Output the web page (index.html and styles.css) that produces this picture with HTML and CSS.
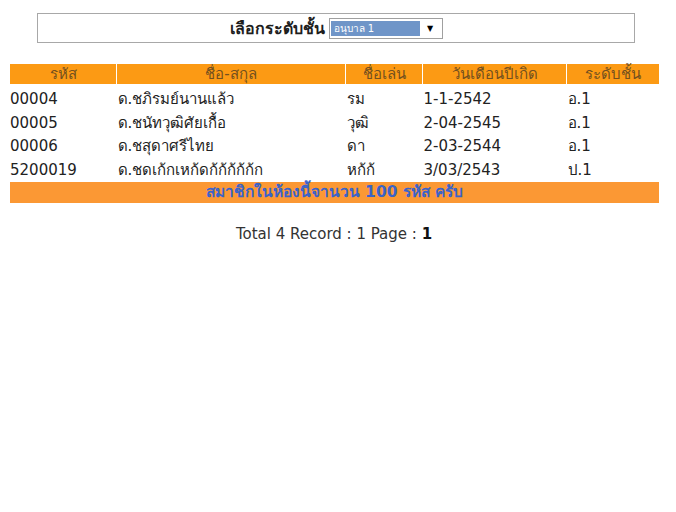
FILE: index.html
```html
<!DOCTYPE html>
<html lang="th">
<head>
<meta charset="utf-8">
<title>รายชื่อนักเรียน</title>
<link rel="stylesheet" href="styles.css">
</head>
<body>
<div class="page">
  <div class="filter">
    <span class="filter-label">เลือกระดับชั้น</span>
    <div class="select">
      <span class="select-value">อนุบาล 1</span>
      <span class="select-arrow">▼</span>
    </div>
  </div>

  <table class="list">
    <thead>
      <tr>
        <th class="c1">รหัส</th>
        <th class="c2">ชื่อ-สกุล</th>
        <th class="c3">ชื่อเล่น</th>
        <th class="c4">วันเดือนปีเกิด</th>
        <th class="c5">ระดับชั้น</th>
      </tr>
    </thead>
    <tbody>
      <tr class="first"><td>00004</td><td>ด.ชภิรมย์นานแล้ว</td><td>รม</td><td>1-1-2542</td><td>อ.1</td></tr>
      <tr><td>00005</td><td>ด.ชนัทวุฒิศัยเกื้อ</td><td>วุฒิ</td><td>2-04-2545</td><td>อ.1</td></tr>
      <tr><td>00006</td><td>ด.ชสุดาศรีไทย</td><td>ดา</td><td>2-03-2544</td><td>อ.1</td></tr>
      <tr><td>5200019</td><td>ด.ชดเก้กเหก้ดก้ก้ก้ก้ก้ก</td><td>หก้ก้</td><td>3/03/2543</td><td>ป.1</td></tr>
    </tbody>
    <tfoot>
      <tr><td colspan="5">สมาชิกในห้องนี้จานวน 100 รหัส ครับ</td></tr>
    </tfoot>
  </table>

  <p class="pager">Total 4 Record : 1 Page : <b>1</b></p>
</div>
</body>
</html>
```

FILE: styles.css
```css
html, body {
  margin: 0;
  padding: 0;
  background: #ffffff;
}

body {
  font-family: "DejaVu Sans", Tahoma, sans-serif;
  color: #222222;
}

.page {
  padding-top: 13px;
}

.filter {
  margin: 0 41px 0 37px;
  height: 28px;
  border: 1px solid #a8a8a8;
  display: flex;
  align-items: center;
  justify-content: center;
  gap: 4px;
}

.filter-label {
  font-size: 16px;
  font-weight: bold;
  color: #1e1e1e;
}

.select {
  width: 110px;
  height: 17px;
  border: 1px solid #a0a0a0;
  display: flex;
  align-items: center;
  padding: 1px;
  box-sizing: content-box;
}

.select-value {
  width: 89px;
  height: 15px;
  background: #6f95c8;
  color: #ffffff;
  font-size: 10px;
  line-height: 15px;
  padding-left: 3px;
  box-sizing: border-box;
}

.select-arrow {
  flex: 1;
  text-align: center;
  font-size: 8px;
  color: #000000;
}

.list {
  margin: 21px 0 0 10px;
  width: 649px;
  border-collapse: collapse;
  table-layout: fixed;
  font-size: 15px;
}

.list th {
  background: #fc9a14;
  color: #73501f;
  font-weight: normal;
  height: 20px;
  padding: 0;
  text-align: center;
  border-left: 1px solid #ffffff;
  line-height: 20px;
}

.list th.c1 { width: 106px; border-left: 0; }
.list th.c2 { width: 228px; }
.list th.c3 { width: 76px; }
.list th.c4 { width: 143px; }
.list th.c5 { width: 92px; }

.list tbody td {
  height: 23.5px;
  padding: 0 0 0 1px;
  line-height: 23.5px;
  white-space: nowrap;
  color: #222222;
}

.list tbody tr.first td {
  padding-top: 4px;
}

.list tbody td:first-child {
  padding-left: 0;
}

.list tfoot td {
  background: #fb9834;
  color: #3b63c8;
  font-weight: bold;
  font-size: 15.5px;
  text-align: center;
  height: 21px;
  line-height: 21px;
  padding: 0;
}

.pager {
  margin: 22px 0 0 0;
  text-align: center;
  font-size: 15px;
  color: #333333;
  padding-right: 8px;
}

.pager b {
  color: #111111;
}
```
